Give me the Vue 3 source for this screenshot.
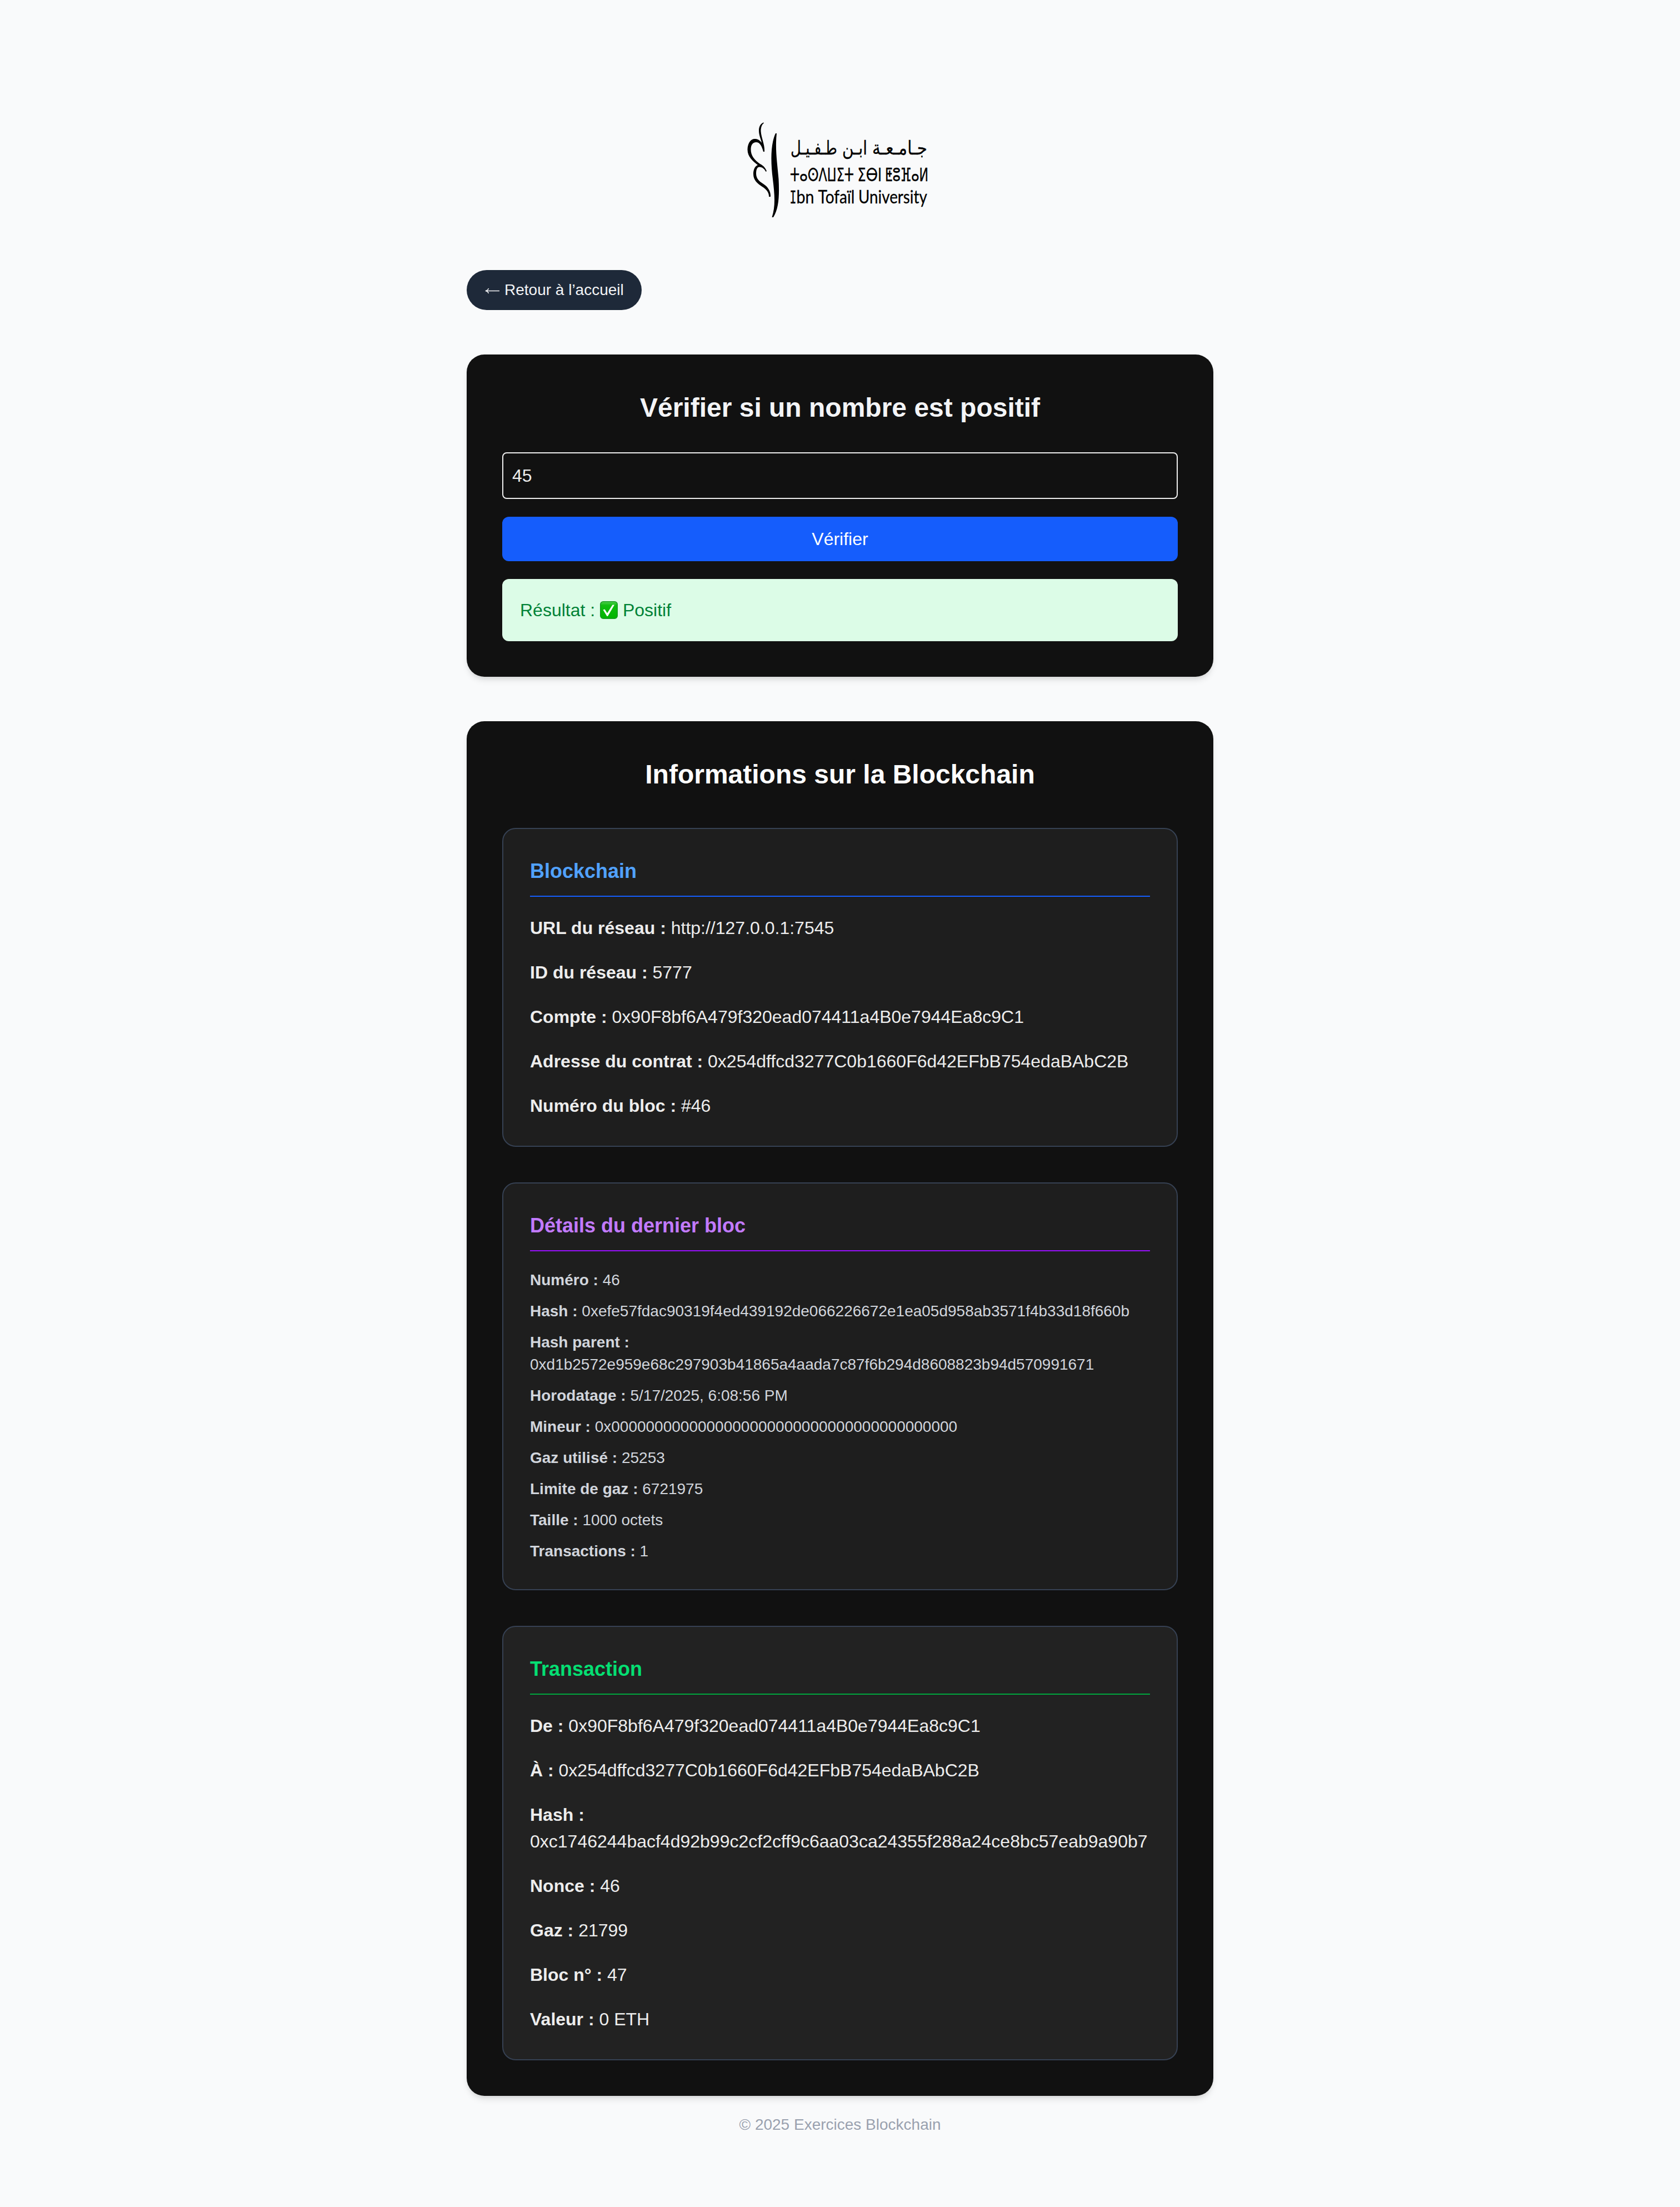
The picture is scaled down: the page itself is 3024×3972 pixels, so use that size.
<script setup>
const blockchain = [
  ['URL du réseau :', 'http://127.0.0.1:7545'],
  ['ID du réseau :', '5777'],
  ['Compte :', '0x90F8bf6A479f320ead074411a4B0e7944Ea8c9C1'],
  ['Adresse du contrat :', '0x254dffcd3277C0b1660F6d42EFbB754edaBAbC2B'],
  ['Numéro du bloc :', '#46'],
]
const block = [
  ['Numéro :', '46'],
  ['Hash :', '0xefe57fdac90319f4ed439192de066226672e1ea05d958ab3571f4b33d18f660b'],
  ['Hash parent :', '0xd1b2572e959e68c297903b41865a4aada7c87f6b294d8608823b94d570991671'],
  ['Horodatage :', '5/17/2025, 6:08:56 PM'],
  ['Mineur :', '0x0000000000000000000000000000000000000000'],
  ['Gaz utilisé :', '25253'],
  ['Limite de gaz :', '6721975'],
  ['Taille :', '1000 octets'],
  ['Transactions :', '1'],
]
const transaction = [
  ['De :', '0x90F8bf6A479f320ead074411a4B0e7944Ea8c9C1'],
  ['À :', '0x254dffcd3277C0b1660F6d42EFbB754edaBAbC2B'],
  ['Hash :', '0xc1746244bacf4d92b99c2cf2cff9c6aa03ca24355f288a24ce8bc57eab9a90b7'],
  ['Nonce :', '46'],
  ['Gaz :', '21799'],
  ['Bloc n° :', '47'],
  ['Valeur :', '0 ETH'],
]
const panels = [
  { title: 'Blockchain', kind: 'chain', rows: blockchain },
  { title: 'Détails du dernier bloc', kind: 'block', rows: block },
  { title: 'Transaction', kind: 'tx', rows: transaction },
]
</script>

<template>
  <div class="page">
    <header class="brand">
      <svg class="logo" viewBox="0 0 380 210" width="380" height="210" aria-label="Ibn Tofaïl University">
        <path d="M54.500 20.500C49 22 46 28 46 35C46 44 50 51 51 57C47 51 42 49.500 37 50C30 51 25.500 60 25.500 69C25.500 82 35 90 44 97C39 99 36 105 36 113C36 124 43 130 52 136C60 141 64.500 147 64 154L67 154C67.500 144 62 136 54 131C46 126 41 121 41 112C41 105 43 100.500 47 100.500C52 100.500 56 104 58.500 109L60 108C57 100 52 97 48 95C38 88 31.500 80 31.500 69C31.500 61 35 56 41 56C47.500 56 51 62 54 73L56 73C57 61 50 47 49.500 36C49.500 29 51.500 24 55 21.500Z" />
        <path d="M76 40C67 59 67 91 71 122C74.500 151 76 171 69.500 191L72 191C82 175 83 152 81.500 122C79 93 75 69 78 40Z" />
        <g class="ar">
          <text transform="translate(349 77.500) scale(.8 1)" textLength="123.750" lengthAdjust="spacingAndGlyphs">جـامـعـة</text>
          <text transform="translate(241 77.500) scale(.8 1)" textLength="56.250" lengthAdjust="spacingAndGlyphs">ابـن</text>
          <text transform="translate(187 77.500) scale(.8 1)" textLength="105" lengthAdjust="spacingAndGlyphs">طـفـيـل</text>
        </g>
        <g class="tif">
          <text transform="translate(102 126) scale(.75 1)" textLength="153.300" lengthAdjust="spacingAndGlyphs">ⵜⴰⵙⴷⵡⵉⵜ</text>
          <text transform="translate(223.500 126) scale(.75 1)" textLength="58" lengthAdjust="spacingAndGlyphs">ⵉⴱⵏ</text>
          <text transform="translate(273 126) scale(.75 1)" textLength="104" lengthAdjust="spacingAndGlyphs">ⵟⵓⴼⴰⵍ</text>
        </g>
        <g class="lat">
          <text class="cap" transform="translate(101.500 166) scale(.62 1)" textLength="19.300" lengthAdjust="spacingAndGlyphs">I</text>
          <text transform="translate(113.500 166) scale(.82 1)" textLength="39" lengthAdjust="spacingAndGlyphs">bn</text>
          <text transform="translate(152.500 166) scale(.82 1)" textLength="80.500" lengthAdjust="spacingAndGlyphs">Tofaïl</text>
          <text transform="translate(225 166) scale(.82 1)" textLength="151" lengthAdjust="spacingAndGlyphs">University</text>
        </g>
      </svg>
    </header>

    <main class="column">
      <a class="back"><svg class="arrow" viewBox="0 0 28 40" width="28" height="40"><path d="M2 21.500H27M7.500 17C6.500 19.500 4.500 21 1.800 21.500C4.500 22 6.500 23.500 7.500 26" /></svg><span>Retour à l’accueil</span></a>

      <section class="card">
        <h2 class="title soft">Vérifier si un nombre est positif</h2>
        <div class="form">
          <input class="field" type="text" value="45" />
          <button class="submit">Vérifier</button>
          <div class="result">
            <span>Résultat :&nbsp;</span>
            <svg class="check" viewBox="0 0 32 32" width="32" height="32">
              <defs>
                <linearGradient id="check-fill" x1="0" y1="0" x2="0" y2="1">
                  <stop offset="0" stop-color="#52d052" />
                  <stop offset=".22" stop-color="#10bd10" />
                  <stop offset="1" stop-color="#00b400" />
                </linearGradient>
              </defs>
              <rect x=".75" y=".75" width="30.500" height="30.500" rx="5" fill="url(#check-fill)" stroke="#159a20" stroke-width="1.500" />
              <path d="M5.500 15.500L8.500 14.500L13 21.500L22.500 6.500H26L14 27H12.500Z" fill="#fff" />
            </svg>
            <span>&nbsp;Positif</span>
          </div>
        </div>
      </section>

      <section class="card">
        <h2 class="title bright">Informations sur la Blockchain</h2>
        <div class="panels">
          <article v-for="p in panels" :key="p.kind" class="panel" :class="p.kind">
            <h3 class="heading">{{ p.title }}</h3>
            <div class="rows">
              <p v-for="r in p.rows" :key="r[0]"><strong>{{ r[0] }}</strong> {{ r[1] }}</p>
            </div>
          </article>
        </div>
      </section>
    </main>

    <footer class="footer">© 2025 Exercices Blockchain</footer>
  </div>
</template>

<style>
body {
  margin: 0;
  background: #f9fafb;
}
</style>

<style scoped>
.page {
  box-sizing: border-box;
  min-height: 3972px;
  padding-top: 200px;
  background: #f9fafb;
  font: 32px/48px "Liberation Sans", Arial, sans-serif;
  display: flex;
  flex-direction: column;
  align-items: center;
}
.brand {
  height: 286px;
  width: 384px;
}
.logo {
  display: block;
  overflow: visible;
  fill: #000;
}
.ar {
  font: 34px "DejaVu Sans", sans-serif;
  direction: rtl;
  stroke: #000;
  stroke-width: 0.3;
}
.tif {
  font: 33.5px "DejaVu Sans", sans-serif;
  stroke: #000;
  stroke-width: 0.4;
}
.lat {
  font: 32px Lato, sans-serif;
  stroke: #000;
  stroke-width: 0.3;
}
.cap {
  font-family: "DejaVu Sans Mono", monospace;
}
.column {
  width: 1344px;
  display: flex;
  flex-direction: column;
  align-items: flex-start;
}
.back {
  display: flex;
  align-items: center;
  gap: 8px;
  padding: 16px 32px;
  border-radius: 36px;
  background: #1e2939;
  color: #f3f4f6;
  font-size: 28px;
  line-height: 40px;
}
.arrow {
  fill: none;
  stroke: #f3f4f6;
  stroke-width: 1.5;
}
.card {
  box-sizing: border-box;
  width: 100%;
  margin-top: 80px;
  padding: 64px;
  border-radius: 32px;
  background: #111;
  box-shadow: 0 8px 12px -2px rgba(0, 0, 0, 0.1), 0 4px 8px -4px rgba(0, 0, 0, 0.1);
}
.title {
  margin: 0;
  font-size: 48px;
  line-height: 64px;
  font-weight: 700;
  text-align: center;
}
.soft {
  color: #f3f4f6;
}
.bright {
  color: #fff;
}
.form {
  margin-top: 48px;
  display: flex;
  flex-direction: column;
  gap: 32px;
}
.field {
  box-sizing: border-box;
  height: 84px;
  padding: 16px;
  border: 2px solid #ededed;
  border-radius: 8px;
  background: transparent;
  color: #ededed;
  font: inherit;
}
.submit {
  height: 80px;
  padding: 0;
  border: 0;
  border-radius: 12px;
  background: #155dfc;
  color: #fff;
  font: inherit;
}
.result {
  display: flex;
  align-items: center;
  padding: 32px;
  border-radius: 12px;
  background: #dcfce7;
  color: #008236;
}
.check {
  margin-bottom: 1px;
}
.panels {
  margin-top: 64px;
  display: flex;
  flex-direction: column;
  gap: 64px;
}
.panel {
  padding: 48px;
  border: 2px solid #364153;
  border-radius: 24px;
  background: #1e1e1e;
  color: #ededed;
}
.heading {
  margin: 0 0 32px;
  padding-bottom: 16px;
  border-bottom: 2px solid;
  font-size: 36px;
  line-height: 56px;
  font-weight: 700;
}
.rows {
  display: flex;
  flex-direction: column;
  gap: 32px;
}
.rows p {
  margin: 0;
}
.chain .heading {
  color: #51a2ff;
  border-color: #155dfc;
}
.block .heading {
  color: #c27aff;
  border-color: #9810fa;
}
.block .rows {
  gap: 16px;
  color: #d1d5dc;
  font-size: 28px;
  line-height: 40px;
}
.tx {
  background: #222;
}
.tx .heading {
  color: #05df72;
  border-color: #00a63e;
}
.footer {
  margin-top: 32px;
  color: #99a1af;
  font-size: 28px;
  line-height: 40px;
}
</style>
